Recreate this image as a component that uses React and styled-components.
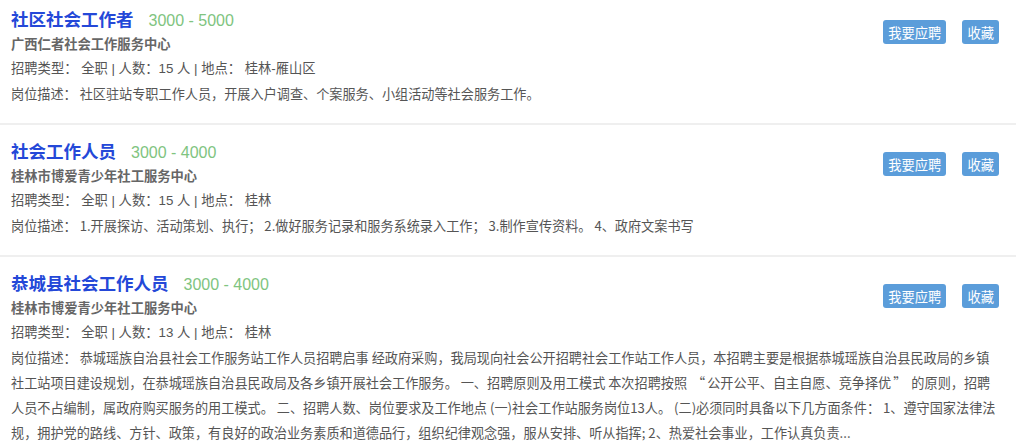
import React from 'react';
import styled, { createGlobalStyle } from 'styled-components';

const GlobalStyle = createGlobalStyle`
  body {
    margin: 0;
    background: #fff;
    font-family: "Liberation Sans", "Noto Sans CJK SC", sans-serif;
  }
`;

const jobs = [
  {
    title: '社区社会工作者',
    salary: '3000 - 5000',
    company: '广西仁者社会工作服务中心',
    count: 15,
    place: '桂林-雁山区',
    desc: ['社区驻站专职工作人员，开展入户调查、个案服务、小组活动等社会服务工作。'],
  },
  {
    title: '社会工作人员',
    salary: '3000 - 4000',
    company: '桂林市博爱青少年社工服务中心',
    count: 15,
    place: '桂林',
    desc: ['1.开展探访、活动策划、执行； 2.做好服务记录和服务系统录入工作； 3.制作宣传资料。 4、政府文案书写'],
  },
  {
    title: '恭城县社会工作人员',
    salary: '3000 - 4000',
    company: '桂林市博爱青少年社工服务中心',
    count: 13,
    place: '桂林',
    desc: [
      '恭城瑶族自治县社会工作服务站工作人员招聘启事 经政府采购，我局现向社会公开招聘社会工作站工作人员，本招聘主要是根据恭城瑶族自治县民政局的乡镇社工站项目建设规划，在恭城瑶族自治县民政局及各乡镇开展社会工作服务。 一、招聘原则及用工模式 本次招聘按照',
      '公开公平、自主自愿、竞争择优',
      '的原则，招聘人员不占编制，属政府购买服务的用工模式。 二、招聘人数、岗位要求及工作地点 (一)社会工作站服务岗位13人。 (二)必须同时具备以下几方面条件： 1、遵守国家法律法规，拥护党的路线、方针、政策，有良好的政治业务素质和道德品行，组织纪律观念强，服从安排、听从指挥; 2、热爱社会事业，工作认真负责...',
    ],
  },
];

export default function App() {
  return (
    <>
      <GlobalStyle />
      <JobList>
        {jobs.map((job, i) => (
          <JobItem key={i}>
            <Actions>
              <ActionButton>我要应聘</ActionButton>
              <ActionButton>收藏</ActionButton>
            </Actions>
            <TitleRow>
              <JobTitle>{job.title}</JobTitle>
              <Salary>{job.salary}</Salary>
            </TitleRow>
            <Company>{job.company}</Company>
            <Meta>
              招聘类型：&nbsp;全职 | 人数：{job.count} 人 | 地点：&nbsp;{job.place}
            </Meta>
            <Desc>
              岗位描述：&nbsp;{job.desc[0]}
              {job.desc.length > 1 && (
                <>
                  <Quote>{job.desc[1]}</Quote>
                  {job.desc[2]}
                </>
              )}
            </Desc>
          </JobItem>
        ))}
      </JobList>
    </>
  );
}

const JobList = styled.ul`
  list-style: none;
  margin: 0;
  padding: 0;
  width: 1016px;
`;

const JobItem = styled.li`
  padding: 15px 17px 17px 11px;
  border-bottom: 2px solid #efefef;

  &:first-child {
    padding-top: 8px;
  }
`;

const Actions = styled.div`
  float: right;
  display: flex;
  gap: 16px;
  margin-top: 12px;
`;

const ActionButton = styled.button`
  height: 24px;
  padding: 0 5px;
  border: none;
  border-radius: 3px;
  background: #5b9dda;
  color: #fff;
  font-family: inherit;
  font-size: 13.3px;
  cursor: pointer;
`;

const TitleRow = styled.div`
  display: flex;
  align-items: baseline;
  line-height: 24px;
`;

const JobTitle = styled.h3`
  margin: 0;
  font-size: 17.5px;
  font-weight: bold;
  color: #2448d8;
`;

const Salary = styled.span`
  margin-left: 15px;
  font-size: 16px;
  color: #80c480;
`;

const Company = styled.div`
  font-size: 13.3px;
  line-height: 24px;
  font-weight: bold;
  color: #666;
`;

const Meta = styled.div`
  font-size: 13.3px;
  line-height: 24px;
  color: #555;
`;

const Desc = styled.p`
  margin: 0;
  font-family: "Noto Sans CJK SC", "Liberation Sans", sans-serif;
  font-size: 13.15px;
  line-height: 25px;
  color: #555;
`;

const Quote = styled.q`
  quotes: "“" "”";

  &::before {
    margin: 0 2px 0 5px;
  }

  &::after {
    margin: 0 5px 0 2px;
  }
`;
